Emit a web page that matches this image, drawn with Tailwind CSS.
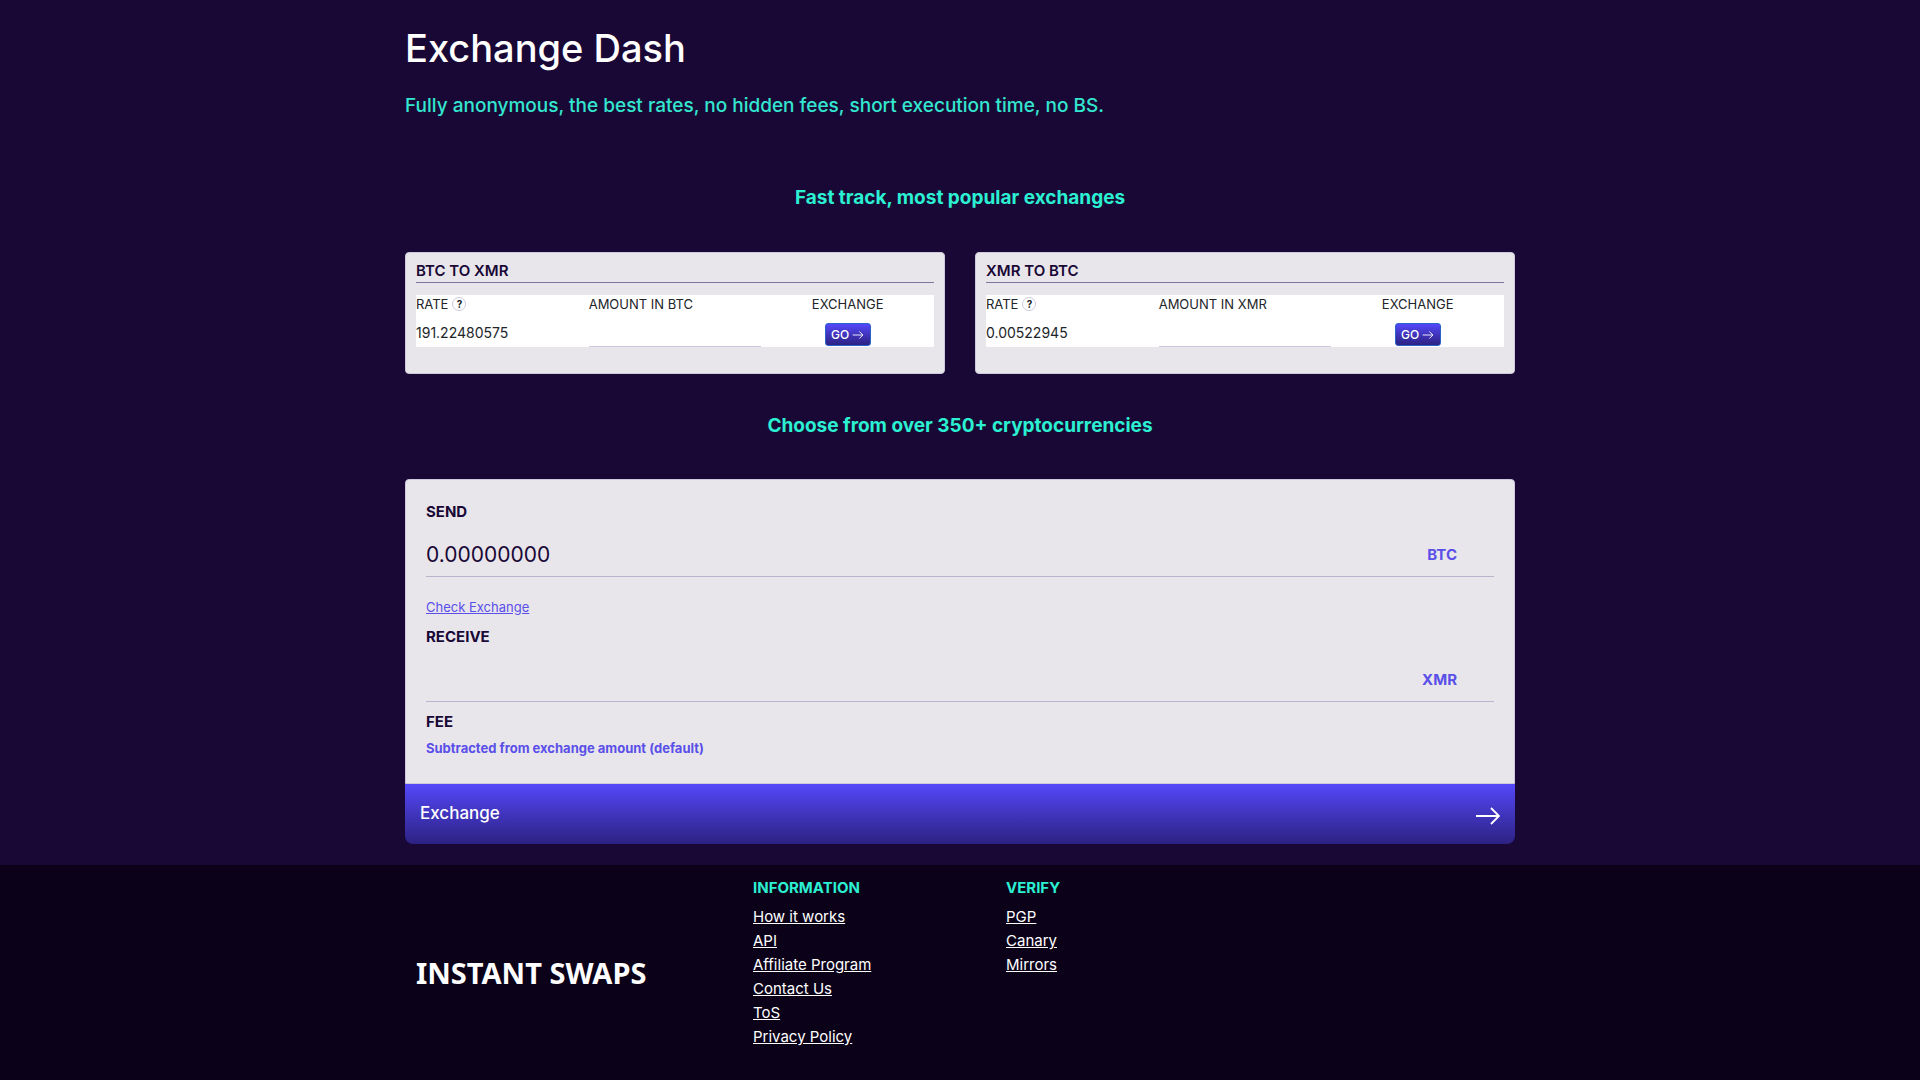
<!DOCTYPE html>
<html lang="en">
<head>
  <meta charset="UTF-8" />
  <meta name="viewport" content="width=device-width, initial-scale=1.0" />
  <title>Exchange Dash</title>
  <script src="https://cdn.jsdelivr.net/npm/@tailwindcss/browser@4"></script>
</head>
<body class="flex min-h-screen flex-col bg-[#190836] font-['Inter',sans-serif] text-[#212529]">

  <main class="mx-auto w-full max-w-[1140px] px-[15px] pb-[21px]">
    <h1 class="pt-6 text-[38px] leading-12 font-medium text-white">Exchange Dash</h1>
    <p class="mt-5 text-[19px] leading-7 font-medium text-[#33e6cf]">Fully anonymous, the best rates, no hidden fees, short execution time, no BS.</p>

    <h2 class="mt-16 text-center text-[19px] leading-7 font-bold text-[#2bf0d2]">Fast track, most popular exchanges</h2>

    <div class="mt-10 grid grid-cols-1 gap-[30px] md:grid-cols-2">
      <!-- BTC to XMR -->
      <form class="rounded border border-[#cdc8dc] bg-[#e8e6eb] px-2.5 pt-2 pb-[26px]">
        <h3 class="border-b border-[#7f76a0] pb-px text-[15px] leading-5 font-semibold text-[#190836]">BTC TO XMR</h3>
        <div class="mt-3 grid h-[52px] grid-cols-3 bg-white">
          <div>
            <div class="flex h-[18px] items-center gap-1 text-[13px] leading-[18px]">RATE
              <button type="button" aria-label="About the rate" class="size-[14px] rounded-full border border-[#cdc8dc] text-[10px] leading-3 font-bold">?</button>
            </div>
            <div class="mt-[10px] text-sm leading-5">191.22480575</div>
          </div>
          <div class="flex flex-col">
            <label for="amount-btc" class="text-[13px] leading-[18px]">AMOUNT IN BTC</label>
            <input id="amount-btc" type="text" class="w-full grow border-b border-[#cdc8dc] text-sm outline-none" />
          </div>
          <div class="flex flex-col items-center">
            <div class="text-[13px] leading-[18px]">EXCHANGE</div>
            <button class="mt-[10px] flex h-[23px] w-[46px] items-center justify-center gap-[3px] rounded-[3px] border border-[#2a63c8] bg-linear-to-b from-[#5548fb] to-[#2c2283] text-xs font-medium text-white">GO
              <svg class="h-2 w-3" viewBox="0 0 24 18" fill="none" stroke="currentColor" stroke-width="2"><path d="M0 9h23M15 1l8 8-8 8" /></svg>
            </button>
          </div>
        </div>
      </form>

      <!-- XMR to BTC -->
      <form class="rounded border border-[#cdc8dc] bg-[#e8e6eb] px-2.5 pt-2 pb-[26px]">
        <h3 class="border-b border-[#7f76a0] pb-px text-[15px] leading-5 font-semibold text-[#190836]">XMR TO BTC</h3>
        <div class="mt-3 grid h-[52px] grid-cols-3 bg-white">
          <div>
            <div class="flex h-[18px] items-center gap-1 text-[13px] leading-[18px]">RATE
              <button type="button" aria-label="About the rate" class="size-[14px] rounded-full border border-[#cdc8dc] text-[10px] leading-3 font-bold">?</button>
            </div>
            <div class="mt-[10px] text-sm leading-5">0.00522945</div>
          </div>
          <div class="flex flex-col">
            <label for="amount-xmr" class="text-[13px] leading-[18px]">AMOUNT IN XMR</label>
            <input id="amount-xmr" type="text" class="w-full grow border-b border-[#cdc8dc] text-sm outline-none" />
          </div>
          <div class="flex flex-col items-center">
            <div class="text-[13px] leading-[18px]">EXCHANGE</div>
            <button class="mt-[10px] flex h-[23px] w-[46px] items-center justify-center gap-[3px] rounded-[3px] border border-[#2a63c8] bg-linear-to-b from-[#5548fb] to-[#2c2283] text-xs font-medium text-white">GO
              <svg class="h-2 w-3" viewBox="0 0 24 18" fill="none" stroke="currentColor" stroke-width="2"><path d="M0 9h23M15 1l8 8-8 8" /></svg>
            </button>
          </div>
        </div>
      </form>
    </div>

    <h2 class="mt-[38px] text-center text-[19px] leading-7 font-bold text-[#2bf0d2]">Choose from over 350+ cryptocurrencies</h2>

    <form class="mt-[39px]">
      <div class="rounded-t border border-[#cdc8dc] bg-[#e8e6eb] px-5 pt-[22px] pb-6 text-[#190836]">
        <label for="send" class="block text-[15px] leading-5 font-bold">SEND</label>
        <div class="mt-3 flex h-[43px] border-b border-[#b9b5cf]">
          <input id="send" type="text" value="0.00000000" class="min-w-0 grow text-[21px] outline-none" />
          <select aria-label="Currency to send" class="w-24 appearance-none pr-[37px] text-right text-[15px] font-bold text-[#5a4fe8] outline-none [text-align-last:right]">
            <option>BTC</option>
            <option>XMR</option>
          </select>
        </div>

        <a href="#" class="mt-5 block w-fit text-[13px] leading-5 text-[#5a4fe8] underline">Check Exchange</a>

        <label for="receive" class="mt-[10px] block text-[15px] leading-5 font-bold">RECEIVE</label>
        <div class="mt-3 flex h-[43px] border-b border-[#b9b5cf]">
          <input id="receive" type="text" class="min-w-0 grow text-[21px] outline-none" />
          <select aria-label="Currency to receive" class="w-24 appearance-none pr-[37px] text-right text-[15px] font-bold text-[#5a4fe8] outline-none [text-align-last:right]">
            <option>XMR</option>
            <option>BTC</option>
          </select>
        </div>

        <label for="fee" class="mt-[10px] block text-[15px] leading-5 font-bold">FEE</label>
        <select id="fee" class="mt-[7px] block h-5 appearance-none text-[13px] font-bold text-[#5a4fe8] outline-none">
          <option>Subtracted from exchange amount (default)</option>
        </select>
      </div>
      <button class="flex h-[60px] w-full items-center justify-between rounded-b-lg bg-linear-to-b from-[#5548fb] to-[#2c2283] px-[15px] text-[17px] font-medium text-white">Exchange
        <svg class="mt-1 h-[18px] w-6" viewBox="0 0 24 18" fill="none" stroke="currentColor" stroke-width="1.8"><path d="M0 9h23M15 1l8 8-8 8" /></svg>
      </button>
    </form>
  </main>

  <footer class="grow bg-[#0b021a]">
    <div class="mx-auto flex w-full max-w-[1140px] px-[26px] pt-[11px] pb-8">
      <div class="flex w-[337px] items-center pt-5 font-['Noto_Sans',sans-serif] text-[29px] leading-10 font-bold text-white">INSTANT SWAPS</div>
      <div class="w-[253px]">
        <h4 class="text-[15px] leading-6 font-bold text-[#2bf0d2]">INFORMATION</h4>
        <ul class="mt-[5px] text-[15px] leading-6 text-white underline">
          <li><a href="#">How it works</a></li>
          <li><a href="#">API</a></li>
          <li><a href="#">Affiliate Program</a></li>
          <li><a href="#">Contact Us</a></li>
          <li><a href="#">ToS</a></li>
          <li><a href="#">Privacy Policy</a></li>
        </ul>
      </div>
      <div>
        <h4 class="text-[15px] leading-6 font-bold text-[#2bf0d2]">VERIFY</h4>
        <ul class="mt-[5px] text-[15px] leading-6 text-white underline">
          <li><a href="#">PGP</a></li>
          <li><a href="#">Canary</a></li>
          <li><a href="#">Mirrors</a></li>
        </ul>
      </div>
    </div>
  </footer>

</body>
</html>
